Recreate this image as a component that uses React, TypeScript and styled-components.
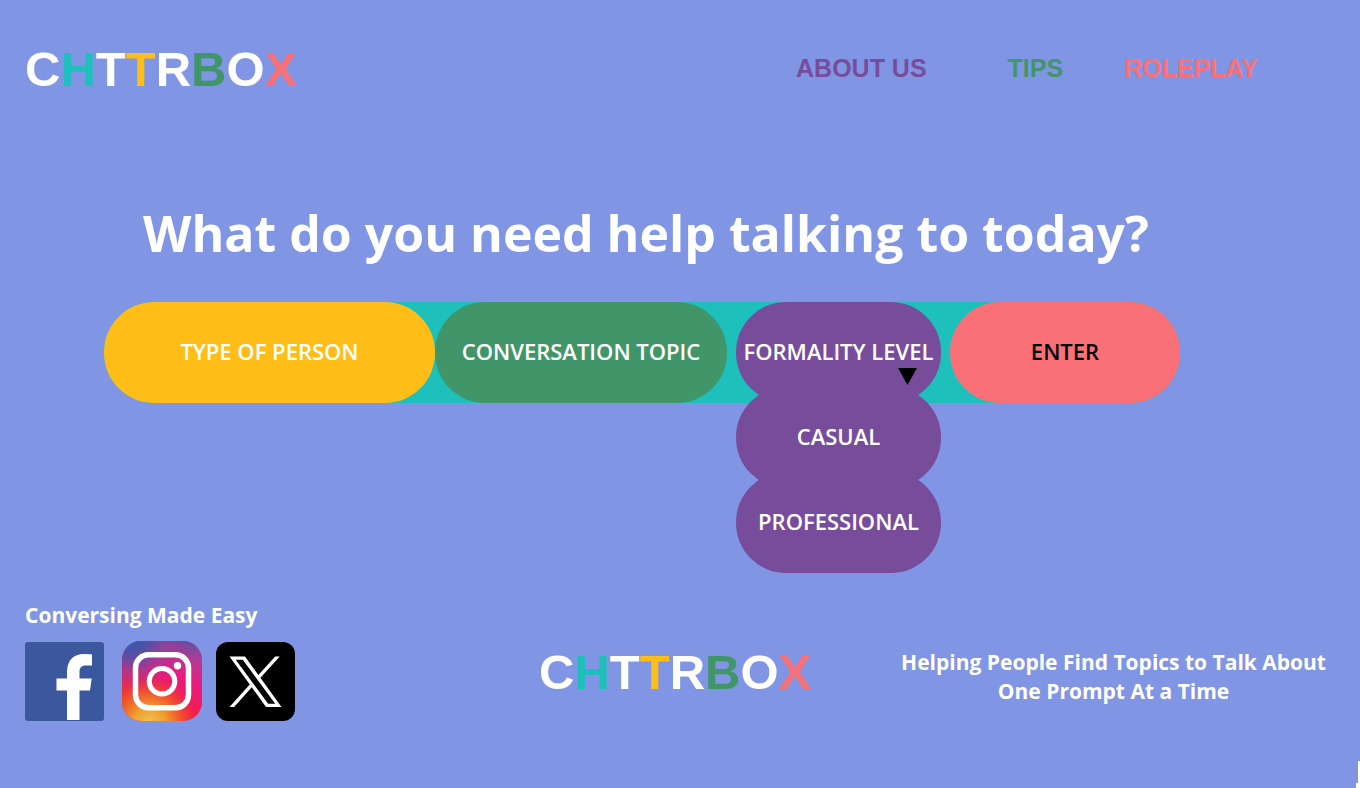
import React, { useState } from "react";
import styled, { createGlobalStyle } from "styled-components";

const color = {
  page: "#8095e4",
  white: "#ffffff",
  black: "#000000",
  teal: "#1dc0bb",
  yellow: "#ffbd17",
  green: "#419669",
  purple: "#774d9b",
  coral: "#f97176",
};

const display = `"Liberation Sans", Arial, sans-serif`;
const text = `"Open Sans", "Noto Sans", sans-serif`;

const GlobalStyle = createGlobalStyle`
  *, *::before, *::after { box-sizing: border-box; }
  body { margin: 0; background: ${color.page}; }
`;

const Page = styled.div`
  position: relative;
  display: flex;
  flex-direction: column;
  min-height: 100vh;
  background: ${color.page};
  color: ${color.white};
  font-family: ${text};
`;

const Header = styled.header`
  display: flex;
  align-items: center;
  justify-content: space-between;
  padding: 39px 102px 0 25px;
`;

const LogoLink = styled.a`
  font-family: ${display};
  font-size: 49px;
  line-height: 60px;
  font-weight: 700;
  text-decoration: none;
  white-space: nowrap;
`;

const Letter = styled.span<{ $color: string }>`
  color: ${(p) => p.$color};
`;

const Nav = styled.nav`
  display: flex;
  align-items: center;
  padding-bottom: 2px;
`;

const NavLink = styled.a<{ $color: string; $gap?: number }>`
  margin-left: ${(p) => p.$gap ?? 0}px;
  color: ${(p) => p.$color};
  font-family: ${display};
  font-size: 25px;
  line-height: 32px;
  font-weight: 700;
  text-decoration: none;
  white-space: nowrap;
`;

const Main = styled.main`
  flex: 1;
  padding: 99px 180px 0 104px;
`;

const Heading = styled.h1`
  margin: 0 0 34px;
  padding-left: 8px;
  font-size: 50px;
  line-height: 70px;
  font-weight: 700;
  text-align: center;
`;

const PickerBar = styled.form`
  display: grid;
  grid-template-columns: 331fr 292fr 214fr 239fr;
  border-radius: 50px;
  background: ${color.teal};
`;

const Cell = styled.div<{ $gap?: boolean }>`
  position: relative;
  display: flex;
  padding-left: ${(p) => (p.$gap ? 9 : 0)}px;
`;

const Pill = styled.button<{ $fill: string; $ink?: string }>`
  position: relative;
  flex: 1;
  width: 100%;
  height: 101px;
  padding: 0 0 4px;
  border: 0;
  border-radius: 50px;
  background: ${(p) => p.$fill};
  color: ${(p) => p.$ink ?? color.white};
  font-family: ${text};
  font-size: 22px;
  line-height: 30px;
  font-weight: 600;
  white-space: nowrap;
  cursor: pointer;
`;

const Caret = styled.svg`
  position: absolute;
  right: 24px;
  bottom: 18px;
  width: 19px;
  height: 17px;
`;

const Menu = styled.div`
  position: absolute;
  top: 100%;
  left: 9px;
  right: 0;
  display: flex;
  flex-direction: column;
  margin-top: -16px;
`;

const Option = styled(Pill)`
  flex: none;

  & + & {
    margin-top: -16px;
  }
`;

const Footer = styled.footer`
  display: grid;
  grid-template-columns: 514fr 362fr 424fr;
  align-items: end;
  padding: 0 34px 67px 25px;
`;

const Note = styled.p`
  margin: 0;
  font-size: 21px;
  line-height: 29px;
  font-weight: 700;
  white-space: nowrap;
`;

const Slogan = styled(Note)`
  padding-bottom: 15px;
  text-align: center;
`;

const FooterLogo = styled.div`
  padding-bottom: 19px;
`;

const Social = styled.div`
  display: flex;
  align-items: center;
  margin-top: 11px;
`;

const SocialLink = styled.a<{ $gap?: number }>`
  display: flex;
  margin-left: ${(p) => p.$gap ?? 0}px;
`;

const CornerTab = styled.svg`
  position: absolute;
  right: 0;
  bottom: 0;
  width: 4px;
  height: 27px;
`;

const wordmark: [string, string][] = [
  ["C", color.white],
  ["H", color.teal],
  ["T", color.white],
  ["T", color.yellow],
  ["R", color.white],
  ["B", color.green],
  ["O", color.white],
  ["X", color.coral],
];

function Logo() {
  return (
    <LogoLink href="#">
      {wordmark.map(([char, tint], i) => (
        <Letter key={i} $color={tint}>
          {char}
        </Letter>
      ))}
    </LogoLink>
  );
}

function FacebookIcon() {
  return (
    <svg width="79" height="79" viewBox="0 0 79 79" aria-hidden="true">
      <rect width="79" height="79" rx="3" fill="#3b579d" />
      <path
        d="M42 78V48.500H31.500V36.500H42V30C42 18 49 12 58.500 12C62 12 65 12.200 67 12.600V23.500H61C56 23.500 54.500 26 54.500 30V36.500H66.700L65 48.500H54.500V78Z"
        fill="#fff"
      />
    </svg>
  );
}

function InstagramIcon() {
  return (
    <svg width="80" height="80" viewBox="0 0 80 80" aria-hidden="true">
      <defs>
        <linearGradient id="igBase" x1="0.25" y1="0.9" x2="0.75" y2="0.05">
          <stop offset="0" stopColor="#f03c26" />
          <stop offset="0.35" stopColor="#f21c50" />
          <stop offset="0.65" stopColor="#ea1a80" />
          <stop offset="1" stopColor="#a8419a" />
        </linearGradient>
        <radialGradient id="igBlue" cx="0.14" cy="0" r="0.72">
          <stop offset="0" stopColor="#3559ad" />
          <stop offset="0.3" stopColor="#5a4fa5" stopOpacity="0.95" />
          <stop offset="0.6" stopColor="#a63a98" stopOpacity="0.6" />
          <stop offset="1" stopColor="#e0208a" stopOpacity="0" />
        </radialGradient>
        <linearGradient id="igTop" x1="0" y1="0" x2="0" y2="1">
          <stop offset="0" stopColor="#5552a5" />
          <stop offset="0.3" stopColor="#a03c9a" stopOpacity="0" />
        </linearGradient>
        <radialGradient id="igWarm" cx="0.34" cy="1.04" r="0.6">
          <stop offset="0" stopColor="#eec35a" />
          <stop offset="0.35" stopColor="#f0a02c" />
          <stop offset="0.65" stopColor="#f0642a" stopOpacity="0.8" />
          <stop offset="1" stopColor="#f03c26" stopOpacity="0" />
        </radialGradient>
      </defs>
      <rect width="80" height="80" rx="19" fill="url(#igBase)" />
      <rect width="80" height="80" rx="19" fill="url(#igTop)" />
      <rect width="80" height="80" rx="19" fill="url(#igBlue)" />
      <rect width="80" height="80" rx="19" fill="url(#igWarm)" />
      <g fill="none" stroke="#fff">
        <rect x="13.500" y="13.800" width="53" height="53" rx="13" strokeWidth="5.500" />
        <circle cx="40" cy="40.300" r="12.800" strokeWidth="5" />
      </g>
      <circle cx="55.500" cy="24.700" r="3.700" fill="#fff" />
    </svg>
  );
}

function XIcon() {
  return (
    <svg width="79" height="79" viewBox="0 0 79 79" aria-hidden="true">
      <rect width="79" height="79" rx="12" fill="#000" />
      <g transform="translate(13.500 14.500) scale(0.0433)">
        <path
          d="M714.163 519.284L1160.890 0H1055.030L667.137 450.887L357.328 0H0L468.492 681.821L0 1226.370H105.866L515.491 750.218L842.672 1226.370H1200L714.137 519.284H714.163ZM569.165 687.828L521.697 619.934L144.011 79.694H306.615L611.412 515.685L658.880 583.579L1055.080 1150.300H892.476L569.165 687.854V687.828Z"
          transform="scale(1 0.95)"
          fill="#fff"
        />
      </g>
    </svg>
  );
}

export default function App() {
  const [open, setOpen] = useState(true);
  const [level, setLevel] = useState("");

  return (
    <>
      <GlobalStyle />
      <Page>
        <Header>
          <Logo />
          <Nav>
            <NavLink href="#about" $color={color.purple}>ABOUT US</NavLink>
            <NavLink href="#tips" $color={color.green} $gap={81}>TIPS</NavLink>
            <NavLink href="#roleplay" $color={color.coral} $gap={61}>ROLEPLAY</NavLink>
          </Nav>
        </Header>

        <Main>
          <Heading>What do you need help talking to today?</Heading>
          <PickerBar onSubmit={(e) => e.preventDefault()}>
            <Cell>
              <Pill type="button" $fill={color.yellow}>TYPE OF PERSON</Pill>
            </Cell>
            <Cell>
              <Pill type="button" $fill={color.green}>CONVERSATION TOPIC</Pill>
            </Cell>
            <Cell $gap>
              <Pill
                type="button"
                $fill={color.purple}
                aria-haspopup="menu"
                aria-expanded={open}
                onClick={() => setOpen(!open)}
              >
                FORMALITY LEVEL
                <Caret viewBox="0 0 19 17" aria-hidden="true">
                  <path d="M0 0H19L9.500 17Z" fill={color.black} />
                </Caret>
              </Pill>
              {open && (
                <Menu role="menu">
                  {["CASUAL", "PROFESSIONAL"].map((name) => (
                    <Option
                      key={name}
                      type="button"
                      role="menuitemradio"
                      aria-checked={level === name}
                      $fill={color.purple}
                      onClick={() => setLevel(name)}
                    >
                      {name}
                    </Option>
                  ))}
                </Menu>
              )}
            </Cell>
            <Cell $gap>
              <Pill type="submit" $fill={color.coral} $ink={color.black}>ENTER</Pill>
            </Cell>
          </PickerBar>
        </Main>

        <Footer>
          <div>
            <Note>Conversing Made Easy</Note>
            <Social>
              <SocialLink href="#facebook" aria-label="Facebook"><FacebookIcon /></SocialLink>
              <SocialLink href="#instagram" aria-label="Instagram" $gap={18}><InstagramIcon /></SocialLink>
              <SocialLink href="#x" aria-label="X" $gap={14}><XIcon /></SocialLink>
            </Social>
          </div>
          <FooterLogo>
            <Logo />
          </FooterLogo>
          <Slogan>
            Helping People Find Topics to Talk About
            <br />
            One Prompt At a Time
          </Slogan>
        </Footer>

        <CornerTab viewBox="0 0 4 27" aria-hidden="true">
          <path d="M2 0H4V27H0V22H2Z" fill={color.white} />
        </CornerTab>
      </Page>
    </>
  );
}
